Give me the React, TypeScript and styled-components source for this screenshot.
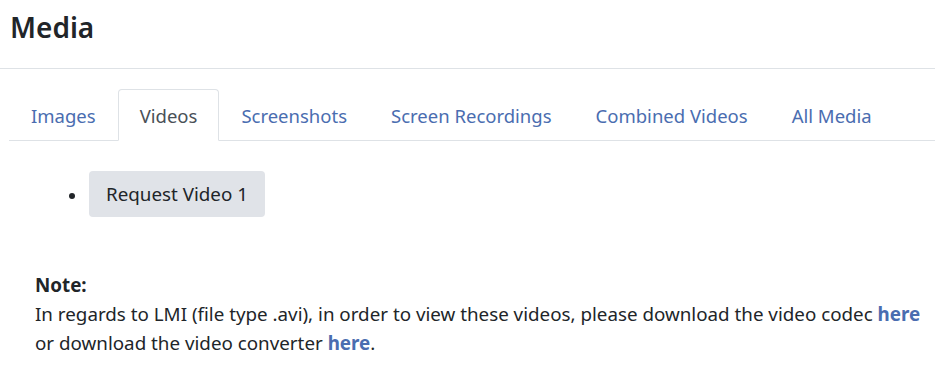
import styled, { createGlobalStyle } from "styled-components";

const Global = createGlobalStyle`
  body {
    margin: 0;
    font-family: "Noto Sans", "Open Sans", sans-serif;
    color: #212529;
    background: #fff;
  }
`;

const tabs = ["Images", "Videos", "Screenshots", "Screen Recordings", "Combined Videos", "All Media"];

function App() {
  return (
    <>
      <Global />
      <Header>
        <Title>Media</Title>
      </Header>
      <Content>
        <Nav>
          {tabs.map((t) => (
            <Tab key={t} $active={t === "Videos"}>{t}</Tab>
          ))}
        </Nav>
        <List>
          <li>
            <Button>Request Video 1</Button>
          </li>
        </List>
        <Note>
          <b>Note:</b>
          <br />
          In regards to LMI (file type .avi), in order to view these videos, please download the video codec{" "}
          <Link href="#">here</Link> or download the video converter <Link href="#">here</Link>.
        </Note>
      </Content>
    </>
  );
}

const Header = styled.div`
  height: 60px;
  padding: 8px 10px 0;
  border-bottom: 1px solid #dee2e6;
  display: flex;
  align-items: flex-start;
`;

const Title = styled.h1`
  margin: 0;
  font-size: 28px;
  line-height: 38px;
  font-weight: 600;
  color: #212529;
`;

const Content = styled.div`
  padding: 20px 0 0 9px;
`;

const Nav = styled.div`
  display: flex;
  border-bottom: 1px solid #dee2e6;
`;

const Tab = styled.a<{ $active?: boolean }>`
  height: 50px;
  padding: 0 21px;
  display: flex;
  align-items: center;
  font-size: 18.5px;
  margin-bottom: -1px;
  border: 1px solid ${(p) => (p.$active ? "#dee2e6" : "transparent")};
  border-bottom-color: ${(p) => (p.$active ? "#fff" : "transparent")};
  border-radius: 4px 4px 0 0;
  background: ${(p) => (p.$active ? "#fff" : "transparent")};
  color: ${(p) => (p.$active ? "#495057" : "#4a6db0")};
  cursor: pointer;
`;

const List = styled.ul`
  margin: 30px 0 0;
  padding-left: 78px;
`;

const Button = styled.button`
  font-family: inherit;
  font-size: 18.8px;
  color: #212529;
  background: #e0e3e8;
  border: none;
  border-radius: 4px;
  height: 46px;
  padding: 0 17px;
  margin-left: 2px;
`;

const Note = styled.p`
  margin: 54px 0 0 26px;
  font-size: 18.8px;
  line-height: 29px;
  color: #212529;
`;

const Link = styled.a`
  color: #4a6db0;
  font-weight: 700;
  text-decoration: none;
`;

export default App;
